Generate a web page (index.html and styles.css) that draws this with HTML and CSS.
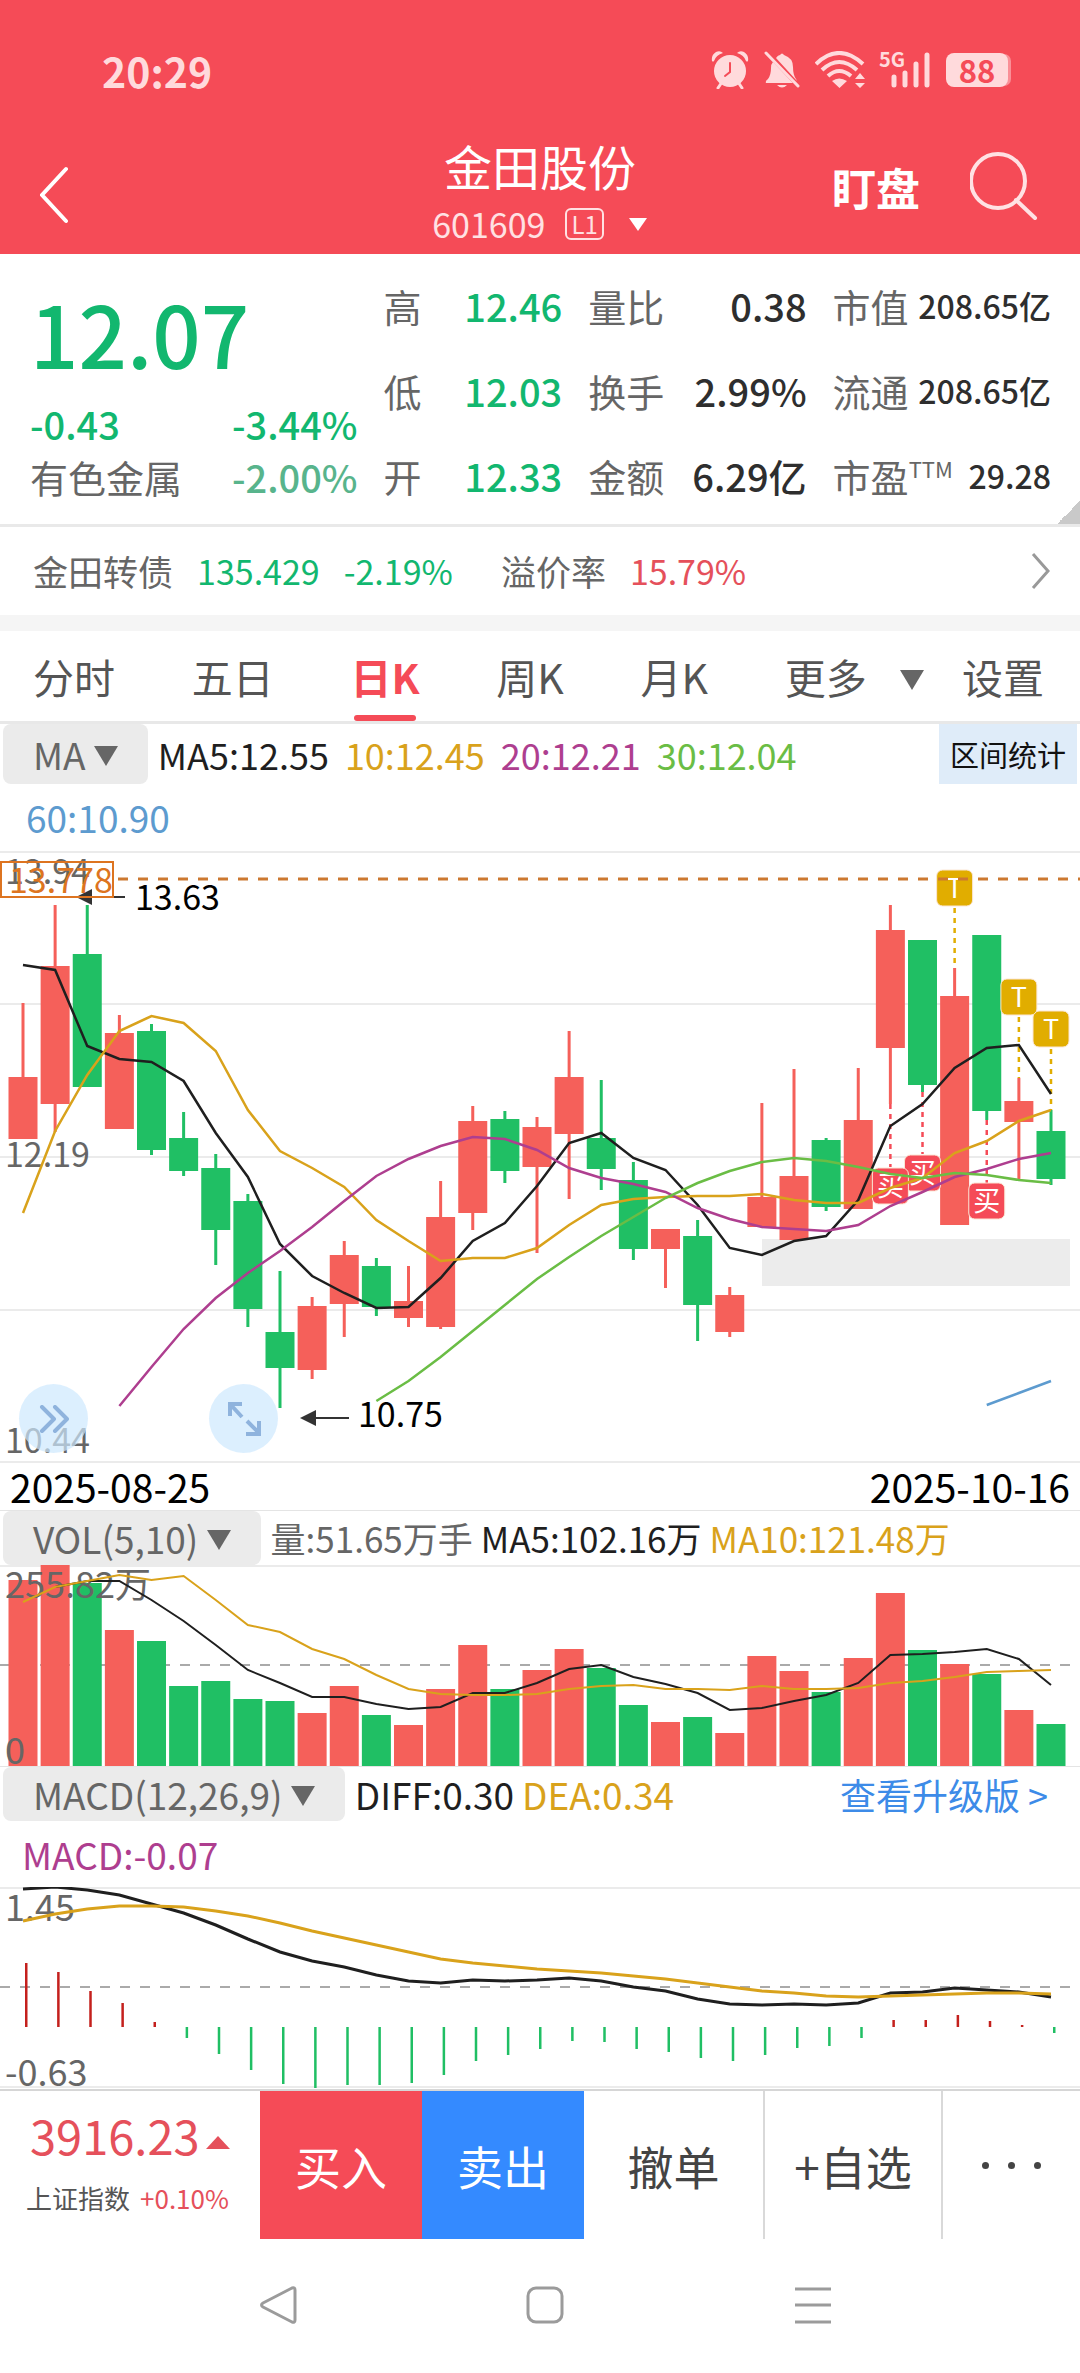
FILE: index.html
```html
<!DOCTYPE html>
<html lang="zh-CN">
  <head>
    <meta charset="UTF-8" />
    <meta name="viewport" content="width=device-width, initial-scale=1.0" />
    <title>金田股份 601609</title>
    <link rel="stylesheet" href="styles.css">
  </head>
  <body>
    <header class="top">
      <div class="status">
        <span class="clock">20:29</span>
        <div class="status-icons">
          <svg width="38" height="38" viewBox="0 0 38 38" fill="currentColor">
            <path d="M1 10Q0 4 5 1Q9-1 12 2Q5 4 3 10Q2 11 1 10ZM37 10Q38 4 33 1Q29-1 26 2Q33 4 35 10Q36 11 37 10Z" />
            <path d="M11 31L7 37M27 31L31 37" stroke="currentColor" stroke-width="3" stroke-linecap="round" />
            <circle cx="19" cy="20" r="16" />
            <path d="M19 12V21L14 25" fill="none" stroke="#f54b57" stroke-width="2" stroke-linecap="round" />
          </svg>
          <svg width="36" height="38" viewBox="0 0 36 38" fill="currentColor">
            <path d="M9 11L29 32H2Q1 30 4 28Q7 24 7 17Q7 13 9 11ZM12 7Q14 4 16 4Q18 1 20 4Q29 7 29 16Q29 24 32 28L33 30ZM13 34H23Q18 39 13 34Z" />
            <path d="M2 2L34 35" stroke="currentColor" stroke-width="3" stroke-linecap="round" />
          </svg>
          <svg width="51" height="38" viewBox="0 0 51 38" fill="none" stroke="currentColor" stroke-width="4">
            <path d="M1 13Q24-9 48 13M7 19Q24 3 42 19M13 25Q24 15 36 25" />
            <path d="M17 30Q24 25 32 30L24.500 37ZM40 28L45 22L50 28ZM40 32H50L45 37Z" fill="currentColor" stroke="none" />
          </svg>
          <span class="signal">
            <span class="net">5G</span>
            <svg width="50" height="38" viewBox="0 0 50 38" stroke="currentColor" stroke-width="5" stroke-linecap="round">
              <path d="M13 26V34M24 22V34M35 13V34M46 4V34" />
            </svg>
          </span>
          <span class="battery">88</span>
        </div>
      </div>
      <div class="titlebar">
        <button class="icon-btn" aria-label="返回">
          <svg width="30" height="58" viewBox="0 0 30 58" fill="none" stroke="#fff" stroke-width="4" stroke-linecap="round">
            <path d="M26 3L2 29L26 55" />
          </svg>
        </button>
        <div class="name">
          <h1>金田股份</h1>
          <p class="code">601609 <span class="level">L1</span>
            <svg width="20" height="13" viewBox="0 0 20 13" fill="#fff"><path d="M1 0H19L10 13Z" /></svg>
          </p>
        </div>
        <div class="tools">
          <button class="watch">盯盘</button>
          <button class="icon-btn" aria-label="搜索">
            <svg width="70" height="70" viewBox="0 0 70 70" fill="none" stroke="#ffe1e3" stroke-width="4" stroke-linecap="round">
              <circle cx="28" cy="29" r="27" />
              <path d="M46 48L65 66" />
            </svg>
          </button>
        </div>
      </div>
    </header>

    <main>
      <section class="quote">
        <div class="price">
          <strong class="last">12.07</strong>
          <div class="pair"><span>-0.43</span><span>-3.44%</span></div>
          <div class="pair"><span class="sector">有色金属</span><span class="soft">-2.00%</span></div>
        </div>
        <dl class="stats">
          <div><dt>高</dt><dd class="down">12.46</dd></div>
          <div><dt>低</dt><dd class="down">12.03</dd></div>
          <div><dt>开</dt><dd class="down">12.33</dd></div>
        </dl>
        <dl class="stats">
          <div><dt>量比</dt><dd>0.38</dd></div>
          <div><dt>换手</dt><dd>2.99%</dd></div>
          <div><dt>金额</dt><dd>6.29亿</dd></div>
        </dl>
        <dl class="stats small">
          <div><dt>市值</dt><dd>208.65亿</dd></div>
          <div><dt>流通</dt><dd>208.65亿</dd></div>
          <div><dt>市盈<sup>TTM</sup></dt><dd>29.28</dd></div>
        </dl>
      </section>

      <a class="bond" href="#">
        <span>金田转债</span>
        <span class="down">135.429</span>
        <span class="down">-2.19%</span>
        <span class="premium">溢价率</span>
        <span class="up">15.79%</span>
        <svg class="more" width="19" height="36" viewBox="0 0 19 36" fill="none" stroke="#999" stroke-width="3"><path d="M2 1L17 18L2 35" /></svg>
      </a>

      <nav class="tabs">
        <button>分时</button>
        <button>五日</button>
        <button class="active">日K</button>
        <button>周K</button>
        <button>月K</button>
        <div class="tabs-end">
          <button class="drop">更多 <i class="caret"></i></button>
          <button>设置</button>
        </div>
      </nav>

      <section class="panel">
        <div class="legend">
          <button class="pick">MA <i class="caret"></i></button>
          <p class="values wide">
            <span class="c-black">MA5:12.55</span>
            <span class="c-gold">10:12.45</span>
            <span class="c-purple">20:12.21</span>
            <span class="c-green">30:12.04</span>
          </p>
          <button class="range">区间统计</button>
        </div>
        <p class="legend-more ma60">60:10.90</p>
        <div class="chart-box">
          <svg id="kline" class="chart" viewBox="0 852 1080 612"></svg>
          <button class="float float-next" aria-label="展开">
            <svg width="30" height="28" viewBox="0 0 30 28" fill="none" stroke="#8fb3dd" stroke-width="4" stroke-linecap="round" stroke-linejoin="round"><path d="M3 2L15 14L3 26M16 2L28 14L16 26" /></svg>
          </button>
          <button class="float float-full" aria-label="全屏">
            <svg width="34" height="34" viewBox="0 0 34 34" fill="none" stroke="#8fb3dd" stroke-width="4"><path d="M15 2H3V14M3 2L15 15M20 19L32 31M32 19V32H19" /></svg>
          </button>
        </div>
        <div class="dates"><time>2025-08-25</time><time>2025-10-16</time></div>
      </section>

      <section class="panel">
        <div class="legend tight">
          <button class="pick">VOL(5,10) <i class="caret"></i></button>
          <p class="values">
            <span>量:51.65万手</span>
            <span class="c-black">MA5:102.16万</span>
            <span class="c-gold">MA10:121.48万</span>
          </p>
        </div>
        <svg id="volume" class="chart" viewBox="0 1566 1080 201"></svg>
      </section>

      <section class="panel">
        <div class="legend tight">
          <button class="pick">MACD(12,26,9) <i class="caret"></i></button>
          <p class="values large">
            <span class="c-black">DIFF:0.30</span>
            <span class="c-gold">DEA:0.34</span>
          </p>
          <a class="upgrade" href="#">查看升级版 &gt;</a>
        </div>
        <p class="legend-more macd">MACD:-0.07</p>
        <svg id="macd" class="chart" viewBox="0 1888 1080 202"></svg>
      </section>
    </main>

    <footer>
      <div class="actions">
        <div class="index">
          <p class="index-value">3916.23 <svg width="24" height="13" viewBox="0 0 24 13" fill="#e5505b"><path d="M0 13L12 0L24 13Z" /></svg></p>
          <p class="index-name">上证指数 <span class="up">+0.10%</span></p>
        </div>
        <button class="buy">买入</button>
        <button class="sell">卖出</button>
        <button class="cancel">撤单</button>
        <button class="add">+自选</button>
        <button class="dots" aria-label="更多操作"><i></i><i></i><i></i></button>
      </div>
      <div class="sysnav">
        <svg width="38" height="38" viewBox="0 0 38 38" fill="none" stroke="#9b9b9b" stroke-width="3" stroke-linejoin="round"><path d="M33 2Q36 1 36 4V34Q36 37 33 36L4 21Q1 19 4 17Z" /></svg>
        <svg width="38" height="38" viewBox="0 0 38 38" fill="none" stroke="#9b9b9b" stroke-width="3"><rect x="2" y="2" width="34" height="34" rx="8" /></svg>
        <svg width="38" height="38" viewBox="0 0 38 38" stroke="#9b9b9b" stroke-width="3"><path d="M1 3H37M1 19H37M1 36H37" /></svg>
      </div>
    </footer>

    <script src="charts.js"></script>
  </body>
</html>
```
FILE: styles.css
```css
* {
  box-sizing: border-box;
}

body {
  margin: 0;
  font-family: "Noto Sans CJK SC", sans-serif;
  background-color: #fff;
  color: #666;
  display: flex;
  flex-direction: column;
  min-height: 100vh;
}

h1,
p,
dl,
dd {
  margin: 0;
}

h1 {
  font-weight: 400;
  font-size: 48px;
  line-height: 58px;
}

button {
  border: none;
  padding: 0;
  background: none;
  font: inherit;
  color: inherit;
  cursor: pointer;
}

a {
  color: inherit;
  text-decoration: none;
}

svg {
  display: block;
}

.up {
  color: #e5505b;
}

.down {
  color: #12b76f;
}

/* header */
.top {
  background-color: #f54b57;
  color: #fff;
}

.status {
  display: flex;
  justify-content: space-between;
  align-items: center;
  padding: 44px 72px 0 102px;
  color: #ffdadc;
}

.clock {
  font-size: 41px;
  line-height: 52px;
  font-weight: 700;
}

.status-icons {
  display: flex;
  align-items: center;
  gap: 15px;
}

.signal {
  position: relative;
}

.net {
  position: absolute;
  top: -3px;
  left: -2px;
  font-size: 20px;
  line-height: 22px;
  font-weight: 700;
}

.battery {
  width: 62px;
  border-radius: 8px;
  background-color: #ffdadc;
  color: #f54b57;
  font-size: 31px;
  line-height: 34px;
  font-weight: 700;
  text-align: center;
  box-shadow: 4px 0 0 -1px #fa8f97;
}

.titlebar {
  display: grid;
  grid-template-columns: 1fr auto 1fr;
  align-items: center;
  padding: 40px 40px 0;
}

.name {
  text-align: center;
}

.code {
  display: flex;
  align-items: center;
  justify-content: center;
  gap: 20px;
  font-size: 34px;
  line-height: 60px;
  color: #ffe1e3;
}

.level {
  border: 2px solid #ffe1e3;
  border-radius: 6px;
  padding: 0 4px;
  font-size: 24px;
  line-height: 28px;
}

.code svg {
  margin-left: 4px;
}

.titlebar > .icon-btn {
  justify-self: start;
}

.tools {
  justify-self: end;
  display: flex;
  align-items: center;
  gap: 50px;
  margin-bottom: 16px;
}

.watch {
  font-size: 44px;
  line-height: 60px;
  font-weight: 700;
}

/* quote */
.quote {
  display: grid;
  grid-template-columns: 33fr 18fr 22fr 22fr;
  gap: 26px;
  padding: 9px 29px 6px 30px;
  border-bottom: 3px solid #e9e9e9;
  background: linear-gradient(135deg, transparent 50%, #c9c9c9 50%) right bottom / 23px 23px no-repeat;
}

.price {
  color: #12b76f;
}

.last {
  display: block;
  font-size: 85px;
  line-height: 130px;
  font-weight: 500;
  padding-top: 4px;
}

.pair {
  display: flex;
  justify-content: space-between;
  font-size: 38px;
  line-height: 53px;
  font-weight: 500;
}

.pair .sector {
  color: #666;
  font-weight: 400;
}

.pair .soft {
  color: #58b48c;
}

.stats {
  font-size: 38px;
  line-height: 85px;
}

.stats div {
  display: flex;
  justify-content: space-between;
}

.stats dd {
  font-weight: 500;
}

.stats dd:not(.down) {
  color: #2e2e2e;
}

.small dd {
  font-size: 32px;
}

sup {
  font-size: 22px;
  line-height: 22px;
}

.bond {
  display: flex;
  align-items: center;
  gap: 24px;
  padding: 0 30px 0 33px;
  font-size: 35px;
  line-height: 88px;
  border-bottom: 16px solid #f5f5f5;
}

.bond .up,
.bond .down {
  font-size: 34px;
}

.premium {
  margin-left: 24px;
}

.more {
  margin-left: auto;
}

/* tabs */
.tabs {
  display: flex;
  justify-content: space-between;
  padding: 0 36px 0 33px;
  border-bottom: 3px solid #e8e8e8;
  font-size: 41px;
  line-height: 90px;
  color: #555;
}

.tabs-end {
  display: flex;
  gap: 38px;
}

.tabs .active {
  position: relative;
  color: #f54b57;
  font-weight: 700;
}

.tabs .active::after {
  content: "";
  position: absolute;
  left: 4px;
  right: 4px;
  bottom: 0;
  height: 6px;
  border-radius: 3px;
  background-color: #f54b57;
}

.caret {
  display: inline-block;
  border: 12px solid transparent;
  border-top: 20px solid #666;
  border-bottom: 0;
  vertical-align: 4px;
}

.drop .caret {
  margin-left: 24px;
}

/* chart panels */
.legend {
  display: flex;
  align-items: stretch;
  padding: 0 3px;
  font-size: 36px;
  line-height: 60px;
}

.tight {
  line-height: 54px;
  border-top: 1px solid #e4e4e4;
}

.pick {
  background-color: #ebebeb;
  border-radius: 8px;
  padding: 0 30px;
  font-size: 37px;
}

.values {
  display: flex;
  gap: 8px;
  padding-left: 10px;
  font-size: 35px;
}

.wide {
  gap: 16px;
  font-size: 36px;
}

.large {
  font-size: 37px;
}

.c-black {
  color: #1f1f1f;
}

.c-gold {
  color: #d9a21b;
}

.c-purple {
  color: #ae3e8f;
}

.c-green {
  color: #6abd45;
}

.range {
  margin-left: auto;
  padding: 0 11px;
  background-color: #dfecf9;
  color: #111;
  font-size: 29px;
}

.upgrade {
  margin-left: auto;
  padding-right: 29px;
  color: #3d8be8;
  font-size: 36px;
}

.legend-more {
  font-size: 37px;
}

.ma60 {
  padding: 0 26px;
  line-height: 67px;
  color: #5d9bcf;
}

.macd {
  padding: 0 22px;
  line-height: 66px;
  color: #ae3e8f;
}

.chart-box {
  position: relative;
}

.chart {
  width: 100%;
  height: auto;
}

.chart text {
  font-size: 36px;
  fill: #666;
}

.chart .price-tag {
  font-size: 34px;
}

.chart .mark {
  fill: #000;
}

.chart .alert {
  fill: #dd7420;
}

.chart .badge {
  font-size: 27px;
  fill: #fff;
  text-anchor: middle;
}

.float {
  position: absolute;
  bottom: 10px;
  width: 69px;
  height: 69px;
  border-radius: 50%;
  background-color: rgba(205, 232, 254, 0.7);
  display: flex;
  align-items: center;
  justify-content: center;
}

.float-next {
  left: 19px;
}

.float-full {
  left: 209px;
}

.dates {
  display: flex;
  justify-content: space-between;
  padding: 0 10px;
  font-size: 39px;
  line-height: 47px;
  color: #000;
}

/* bottom */
.actions {
  display: grid;
  grid-template-columns: 260fr 162fr 162fr 179fr 178fr 139fr;
  height: 150px;
  border-top: 2px solid #d6d6d6;
  font-size: 46px;
  color: #444;
}

.index {
  padding: 12px 0 0 26px;
}

.index-value {
  display: flex;
  align-items: center;
  gap: 6px;
  padding-left: 4px;
  font-size: 47px;
  line-height: 64px;
  color: #e5505b;
}

.index-value svg {
  margin-top: 14px;
}

.index-name {
  display: flex;
  gap: 10px;
  font-size: 26px;
  line-height: 62px;
  color: #555;
}

.buy,
.sell {
  color: #fff;
}

.buy {
  background-color: #f54b57;
}

.sell {
  background-color: #348aff;
}

.add,
.dots {
  border-left: 2px solid #d9d9d9;
}

.dots {
  display: flex;
  align-items: center;
  justify-content: center;
  gap: 19px;
}

.dots i {
  width: 7px;
  height: 7px;
  border-radius: 50%;
  background-color: #444;
}

.sysnav {
  display: flex;
  justify-content: space-between;
  padding: 47px 23% 40px 24%;
}
```
FILE: charts.js
```js
const RED = "#f5605a";
const GREEN = "#20bf64";
const x = (i) => 23 + i * 32.125;

// colour, high, body top, body bottom, low
const candles = [
  ["r", 1004, 1078, 1140, 1140], ["r", 906, 967, 1105, 1133], ["g", 906, 955, 1088, 1088],
  ["r", 1016, 1034, 1130, 1130], ["g", 1025, 1032, 1151, 1156], ["g", 1113, 1139, 1172, 1177],
  ["g", 1155, 1169, 1231, 1266], ["g", 1195, 1202, 1310, 1328], ["g", 1272, 1333, 1369, 1409],
  ["r", 1298, 1307, 1371, 1380], ["r", 1242, 1256, 1305, 1338], ["g", 1259, 1267, 1308, 1317],
  ["r", 1267, 1302, 1319, 1328], ["r", 1182, 1218, 1328, 1330], ["r", 1107, 1122, 1214, 1231],
  ["g", 1112, 1120, 1172, 1184], ["r", 1118, 1128, 1168, 1254], ["r", 1032, 1078, 1135, 1200],
  ["g", 1081, 1139, 1170, 1191], ["g", 1163, 1181, 1250, 1261], ["r", 1230, 1230, 1250, 1289],
  ["g", 1221, 1237, 1306, 1342], ["r", 1288, 1296, 1333, 1338], ["r", 1104, 1198, 1228, 1228],
  ["r", 1070, 1177, 1241, 1241], ["g", 1139, 1141, 1208, 1212], ["r", 1069, 1121, 1210, 1210],
  ["r", 906, 931, 1049, 1105], ["g", 941, 941, 1086, 1093], ["r", 969, 997, 1226, 1226],
  ["g", 936, 936, 1112, 1121], ["r", 1079, 1102, 1123, 1180], ["g", 1111, 1132, 1180, 1186],
];

const ma5 = [966, 971, 1047, 1060, 1063, 1082, 1134, 1178, 1245, 1277, 1294, 1309, 1308, 1279, 1242, 1224, 1187, 1144, 1134, 1159, 1171, 1206, 1249, 1256, 1242, 1237, 1201, 1127, 1105, 1069, 1049, 1046, 1095];
const ma10 = [1214, 1132, 1076, 1032, 1017, 1024, 1052, 1111, 1152, 1169, 1188, 1221, 1242, 1262, 1259, 1259, 1249, 1226, 1206, 1200, 1198, 1197, 1197, 1195, 1201, 1204, 1204, 1189, 1179, 1154, 1142, 1122, 1111];
const ma20 = [1407, 1368, 1330, 1299, 1274, 1252, 1228, 1202, 1177, 1160, 1147, 1138, 1140, 1151, 1169, 1179, 1185, 1193, 1209, 1220, 1228, 1230, 1232, 1226, 1207, 1193, 1178, 1170, 1160, 1154];
const ma30 = [1402, 1382, 1358, 1332, 1306, 1280, 1258, 1237, 1218, 1199, 1184, 1172, 1163, 1159, 1162, 1168, 1175, 1179, 1174, 1176, 1181, 1184];
const ma60 = [1406, 1394, 1382];

const volumes = [1581, 1566, 1584, 1631, 1642, 1687, 1682, 1700, 1702, 1714, 1687, 1716, 1726, 1690, 1646, 1690, 1671, 1650, 1669, 1706, 1723, 1718, 1734, 1657, 1672, 1693, 1659, 1594, 1651, 1665, 1675, 1711, 1725];
const vol5 = [1588, 1582, 1582, 1601, 1622, 1646, 1671, 1684, 1698, 1698, 1705, 1710, 1708, 1694, 1694, 1684, 1670, 1666, 1678, 1685, 1694, 1711, 1709, 1702, 1696, 1684, 1656, 1655, 1653, 1650, 1660, 1686];
const vol10 = [1603, 1588, 1582, 1576, 1581, 1577, 1601, 1626, 1633, 1650, 1660, 1676, 1690, 1695, 1696, 1696, 1695, 1690, 1687, 1686, 1690, 1690, 1691, 1687, 1690, 1690, 1689, 1684, 1682, 1678, 1673, 1672, 1671];

const diff = [1890, 1888, 1891, 1896, 1905, 1914, 1926, 1940, 1953, 1962, 1968, 1976, 1982, 1984, 1981, 1982, 1981, 1979, 1982, 1988, 1992, 2000, 2005, 2006, 2005, 2006, 2004, 1994, 1993, 1989, 1991, 1993, 1998];
const dea = [1922, 1915, 1910, 1907, 1907, 1908, 1912, 1917, 1924, 1932, 1939, 1946, 1953, 1960, 1964, 1967, 1970, 1972, 1974, 1977, 1980, 1984, 1988, 1992, 1994, 1997, 1998, 1997, 1996, 1995, 1994, 1994, 1995];
const bars = [64, 55, 36, 24, 5, -11, -27, -43, -57, -61, -58, -58, -56, -48, -34, -28, -22, -14, -15, -22, -25, -31, -34, -28, -21, -19, -11, 7, 7, 12, 6, 2, -6];

function line(points, color, start = 0, width = 2.5) {
  const d = points.map((y, i) => `${x(start + i)},${y}`).join(" ");
  return `<polyline points="${d}" fill="none" stroke="${color}" stroke-width="${width}" />`;
}

function rule(y, color = "#ebebeb", extra = "") {
  return `<path d="M0 ${y}H1080" stroke="${color}" stroke-width="2" ${extra} />`;
}

function rect(left, top, width, height, fill) {
  return `<rect x="${left}" y="${top}" width="${width}" height="${height}" fill="${fill}" />`;
}

function text(left, y, label, cls = "") {
  return `<text x="${left}" y="${y}" class="${cls}">${label}</text>`;
}

function arrow(left, y) {
  return `<path d="M${left + 10} ${y}H${left + 49}" stroke="#333" stroke-width="2" /><path d="M${left} ${y}L${left + 16} ${y - 8}V${y + 8}Z" fill="#333" />`;
}

// small square tag with a dashed leader to its candle
function badge(i, top, label, fill, from, to) {
  return `<path d="M${x(i)} ${from}V${to}" stroke="${fill}" stroke-width="2.500" stroke-dasharray="5 5" />
    <rect x="${x(i) - 18}" y="${top}" width="36" height="36" rx="6" fill="${fill}" stroke="#fbe6d5" />
    ${text(x(i), top + 28, label, "badge")}`;
}

function drawKline() {
  let out = [853, 1005, 1158, 1311, 1463].map((y) => rule(y)).join("");
  out += rect(762, 1240, 308, 47, "#ececec");
  candles.forEach(([c, high, top, bottom, low], i) => {
    const color = c === "r" ? RED : GREEN;
    out += rect(x(i) - 1.5, high, 3, low - high, color);
    out += rect(x(i) - 14.5, top, 29, bottom - top, color);
  });
  out += text(5, 885, "13.94", "price-tag") + text(5, 1168, "12.19", "price-tag") + text(5, 1454, "10.44", "price-tag");
  out += arrow(76, 898) + text(135, 911, "13.63", "price-tag mark");
  out += arrow(300, 1419) + text(358, 1428, "10.75", "price-tag mark");
  out += badge(32, 1012, "T", "#e1ad00", 1050, 1111);
  out += badge(31, 980, "T", "#e1ad00", 1018, 1079);
  out += badge(29, 871, "T", "#e1ad00", 909, 969);
  out += badge(28, 1156, "买", "#f54b57", 1093, 1155);
  out += badge(27, 1169, "买", "#f54b57", 1105, 1168);
  out += badge(30, 1184, "买", "#f54b57", 1121, 1184);
  out += line(ma5, "#1f1f1f") + line(ma10, "#d9a21b") + line(ma20, "#ae3e8f", 3);
  out += line(ma30, "#6abd45", 11) + line(ma60, "#5d9bcf", 30);
  out += '<path d="M118 880H1080" stroke="#cc7830" stroke-width="3" stroke-dasharray="10 10" />';
  out += '<rect x="1" y="863" width="112" height="35" fill="none" stroke="#dd7420" stroke-width="2" />';
  out += text(9, 894, "13.778", "price-tag alert");
  document.getElementById("kline").innerHTML = out;
}

function drawVolume() {
  let out = rule(1567) + rule(1666, "#aaa", 'stroke-dasharray="10 10"');
  volumes.forEach((y, i) => {
    out += rect(x(i) - 14.5, y, 29, 1767 - y, candles[i][0] === "r" ? RED : GREEN);
  });
  out += text(5, 1599, "255.82万") + text(5, 1765, "0");
  out += line(vol5, "#1f1f1f", 1, 2) + line(vol10, "#d9a21b", 0, 2);
  document.getElementById("volume").innerHTML = out;
}

function drawMacd() {
  let out = rule(1889) + rule(1988, "#aaa", 'stroke-dasharray="10 10"') + rule(2088);
  bars.forEach((v, i) => {
    out += rect(x(i) + 2, v > 0 ? 2028 - v : 2028, 2.5, Math.abs(v), v > 0 ? "#c4201d" : GREEN);
  });
  out += text(5, 1922, "1.45") + text(5, 2087, "-0.63");
  out += line(diff, "#1f1f1f", 0, 3) + line(dea, "#d9a21b", 0, 3);
  document.getElementById("macd").innerHTML = out;
}

drawKline();
drawVolume();
drawMacd();
```
